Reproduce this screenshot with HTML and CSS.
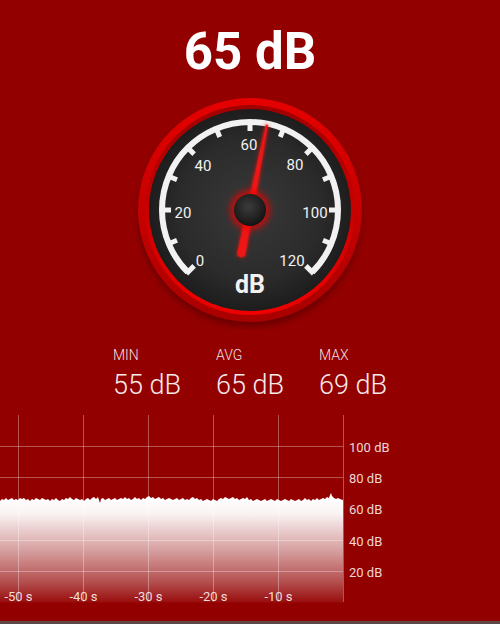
FILE: index.html
```html
<!DOCTYPE html>
<html lang="en">
<head>
    <meta charset="UTF-8">
    <meta name="viewport" content="width=device-width, initial-scale=1.0">
    <title>Sound Meter</title>
    <link rel="stylesheet" href="styles.css">
</head>
<body>
    <div class="screen">
        <h1 class="level">65 dB</h1>

        <div class="gauge">
            <svg width="240" height="240" viewBox="0 0 240 240">
                <defs>
                    <linearGradient id="rim" x1="0" y1="0" x2="0" y2="1">
                        <stop offset="0" stop-color="#e60000"/>
                        <stop offset="1" stop-color="#a80000"/>
                    </linearGradient>
                    <linearGradient id="bevel" x1="0" y1="0" x2="0" y2="1">
                        <stop offset="0" stop-color="#a00000"/>
                        <stop offset="1" stop-color="#f00000"/>
                    </linearGradient>
                    <radialGradient id="face" cx="0.5" cy="0.5" r="0.5">
                        <stop offset="0" stop-color="#383838"/>
                        <stop offset="0.7" stop-color="#2b2b2b"/>
                        <stop offset="1" stop-color="#1d1d1d"/>
                    </radialGradient>
                    <radialGradient id="hub" cx="0.45" cy="0.4" r="0.6">
                        <stop offset="0" stop-color="#3c3c3c"/>
                        <stop offset="1" stop-color="#141414"/>
                    </radialGradient>
                    <filter id="blur" x="-50%" y="-50%" width="200%" height="200%">
                        <feGaussianBlur stdDeviation="3"/>
                    </filter>
                    <filter id="glow" x="-50%" y="-50%" width="200%" height="200%">
                        <feGaussianBlur in="SourceGraphic" stdDeviation="2" result="b"/>
                        <feMerge><feMergeNode in="b"/><feMergeNode in="SourceGraphic"/></feMerge>
                    </filter>
                </defs>

                <!-- rim -->
                <circle cx="120" cy="125" r="112" fill="rgba(60,0,0,0.45)" filter="url(#blur)"/>
                <circle cx="120" cy="120" r="112" fill="url(#rim)"/>
                <circle cx="120" cy="120" r="105" fill="url(#bevel)"/>
                <circle cx="120" cy="120" r="101" fill="url(#face)"/>

                <!-- scale -->
                <path d="M57.8,182.2 A88,88 0 1 1 182.2,182.2" fill="none" stroke="#f2f2f2" stroke-width="6"/>
                <g stroke="#f2f2f2" stroke-width="5">
                    <line x1="120" y1="30" x2="120" y2="41" transform="rotate(-135 120 120)"/>
                    <line x1="120" y1="30" x2="120" y2="41" transform="rotate(-112.5 120 120)"/>
                    <line x1="120" y1="30" x2="120" y2="41" transform="rotate(-90 120 120)"/>
                    <line x1="120" y1="30" x2="120" y2="41" transform="rotate(-67.5 120 120)"/>
                    <line x1="120" y1="30" x2="120" y2="41" transform="rotate(-45 120 120)"/>
                    <line x1="120" y1="30" x2="120" y2="41" transform="rotate(-22.5 120 120)"/>
                    <line x1="120" y1="30" x2="120" y2="41"/>
                    <line x1="120" y1="30" x2="120" y2="41" transform="rotate(22.5 120 120)"/>
                    <line x1="120" y1="30" x2="120" y2="41" transform="rotate(45 120 120)"/>
                    <line x1="120" y1="30" x2="120" y2="41" transform="rotate(67.5 120 120)"/>
                    <line x1="120" y1="30" x2="120" y2="41" transform="rotate(90 120 120)"/>
                    <line x1="120" y1="30" x2="120" y2="41" transform="rotate(112.5 120 120)"/>
                    <line x1="120" y1="30" x2="120" y2="41" transform="rotate(135 120 120)"/>
                </g>
                <g class="dial-num">
                    <text x="70" y="171">0</text>
                    <text x="53" y="123">20</text>
                    <text x="73" y="76">40</text>
                    <text x="119" y="55">60</text>
                    <text x="165" y="75">80</text>
                    <text x="185" y="123">100</text>
                    <text x="162" y="171">120</text>
                </g>
                <text class="dial-unit" x="120" y="194">dB</text>

                <!-- needle -->
                <g transform="rotate(11.25 120 120)" filter="url(#glow)">
                    <path d="M118.8,33 L121.2,33 L124,164 A4,4 0 0 1 116,164 Z" fill="#f01414"/>
                </g>
                <circle cx="120" cy="120" r="20" fill="rgba(235,0,0,0.75)" filter="url(#blur)"/>
                <circle cx="120" cy="120" r="16" fill="url(#hub)"/>
            </svg>
        </div>

        <div class="stats">
            <div class="stat">
                <span class="stat-label">MIN</span>
                <span class="stat-value">55 dB</span>
            </div>
            <div class="stat">
                <span class="stat-label">AVG</span>
                <span class="stat-value">65 dB</span>
            </div>
            <div class="stat">
                <span class="stat-label">MAX</span>
                <span class="stat-value">69 dB</span>
            </div>
        </div>

        <div class="chart">
            <svg width="500" height="211" viewBox="0 0 500 211">
                <defs>
                    <linearGradient id="fade" gradientUnits="userSpaceOnUse" x1="0" y1="88" x2="0" y2="194">
                        <stop offset="0" stop-color="#fff" stop-opacity="1"/>
                        <stop offset="0.15" stop-color="#fff" stop-opacity="0.95"/>
                        <stop offset="0.5" stop-color="#fff" stop-opacity="0.62"/>
                        <stop offset="0.8" stop-color="#fff" stop-opacity="0.3"/>
                        <stop offset="1" stop-color="#fff" stop-opacity="0.03"/>
                    </linearGradient>
                </defs>
                <path fill="url(#fade)" d="M0,192.5 L0,91 L2,89 L4,90 L6,88 L8,90 L10,89 L12,88 L14,90 L16,89 L18,90 L20,88 L22,89 L24,88 L26,90 L28,89 L30,91 L32,89 L34,90 L36,88 L38,89 L40,90 L42,88 L44,89 L46,90 L48,89 L50,91 L52,89 L54,90 L56,88 L58,90 L60,91 L62,89 L64,90 L66,88 L68,89 L70,87 L72,89 L74,90 L76,88 L78,89 L80,90 L82,89 L84,91 L86,89 L88,88 L90,90 L92,88 L94,87 L96,89 L98,87 L100,93 L101,89 L103,88 L105,90 L107,89 L109,88 L111,90 L113,89 L115,88 L117,90 L119,89 L121,88 L123,89 L125,87 L127,89 L129,88 L131,90 L133,89 L135,87 L137,89 L139,88 L141,90 L143,88 L145,89 L147,87 L149,86 L151,88 L153,87 L155,89 L157,88 L159,87 L161,89 L163,88 L165,90 L167,89 L169,88 L171,89 L173,90 L175,89 L177,88 L179,90 L181,89 L183,88 L185,90 L187,89 L189,90 L191,88 L193,87 L195,89 L197,88 L199,90 L201,89 L203,91 L205,90 L207,89 L209,90 L211,91 L213,89 L215,90 L217,91 L219,89 L221,88 L223,89 L225,87 L227,88 L229,89 L231,88 L233,87 L235,89 L237,88 L239,90 L241,89 L243,88 L245,89 L247,87 L249,90 L251,89 L253,91 L255,90 L257,89 L259,90 L261,91 L263,90 L265,89 L267,91 L269,90 L271,89 L273,90 L275,91 L277,89 L279,90 L281,91 L283,90 L285,89 L287,90 L289,91 L291,89 L293,90 L295,91 L297,90 L299,89 L301,91 L303,90 L305,88 L307,90 L309,89 L311,91 L313,89 L315,90 L317,88 L319,90 L321,89 L323,88 L325,89 L327,87 L329,88 L330,85 L331,83 L332,86 L334,88 L336,89 L338,88 L340,89 L343,90 L343,192.5 Z"/>
                <g class="grid">
                    <line x1="0" y1="36.5" x2="343" y2="36.5"/>
                    <line x1="0" y1="67.5" x2="343" y2="67.5"/>
                    <line x1="0" y1="98.5" x2="343" y2="98.5"/>
                    <line x1="0" y1="130.5" x2="343" y2="130.5"/>
                    <line x1="0" y1="161.5" x2="343" y2="161.5"/>
                    <line x1="18.5" y1="5" x2="18.5" y2="192"/>
                    <line x1="83.5" y1="5" x2="83.5" y2="192"/>
                    <line x1="148.5" y1="5" x2="148.5" y2="192"/>
                    <line x1="213.5" y1="5" x2="213.5" y2="192"/>
                    <line x1="278.5" y1="5" x2="278.5" y2="192"/>
                    <line x1="343.5" y1="5" x2="343.5" y2="192"/>
                </g>
                <g class="axis-y">
                    <text x="349" y="37">100 dB</text>
                    <text x="349" y="68">80 dB</text>
                    <text x="349" y="99">60 dB</text>
                    <text x="349" y="131">40 dB</text>
                    <text x="349" y="162">20 dB</text>
                </g>
                <g class="axis-x">
                    <text x="18.5" y="186">-50 s</text>
                    <text x="83.5" y="186">-40 s</text>
                    <text x="148.5" y="186">-30 s</text>
                    <text x="213.5" y="186">-20 s</text>
                    <text x="278.5" y="186">-10 s</text>
                </g>
            </svg>
        </div>
    </div>
</body>
</html>
```

FILE: styles.css
```css
body {
    margin: 0;
    background-color: #930000;
    color: #ffffff;
    font-family: Roboto, "Noto Sans", sans-serif;
}
.screen {
    width: 500px;
    height: 624px;
    display: flex;
    flex-direction: column;
    overflow: hidden;
}
.level {
    margin: 0;
    padding-top: 24px;
    font-size: 51px;
    line-height: 56px;
    font-weight: 700;
    text-align: center;
}
.gauge {
    margin-top: 10px;
    height: 240px;
    display: flex;
    justify-content: center;
}
.dial-num text {
    fill: #f2f2f2;
    font-size: 15px;
    text-anchor: middle;
    dominant-baseline: central;
}
.dial-unit {
    fill: #f2f2f2;
    font-size: 25px;
    font-weight: 700;
    text-anchor: middle;
    dominant-baseline: central;
}
.stats {
    display: flex;
    padding-left: 113px;
    margin-top: 16px;
}
.stat {
    width: 103px;
    display: flex;
    flex-direction: column;
}
.stat-label {
    font-size: 14px;
    font-weight: 300;
    line-height: 18px;
    color: rgba(255, 255, 255, 0.9);
}
.stat-value {
    margin-top: 6px;
    font-size: 27px;
    font-weight: 300;
    line-height: 30px;
    color: #f6eaea;
}
.chart {
    margin-top: 10px;
    height: 211px;
    border-bottom: 3px solid #5c4848;
}
.grid line {
    stroke: rgba(255, 255, 255, 0.32);
    stroke-width: 1;
}
.axis-y text,
.axis-x text {
    fill: rgba(255, 255, 255, 0.85);
    font-size: 13px;
    dominant-baseline: central;
}
.axis-x text {
    text-anchor: middle;
}
```
